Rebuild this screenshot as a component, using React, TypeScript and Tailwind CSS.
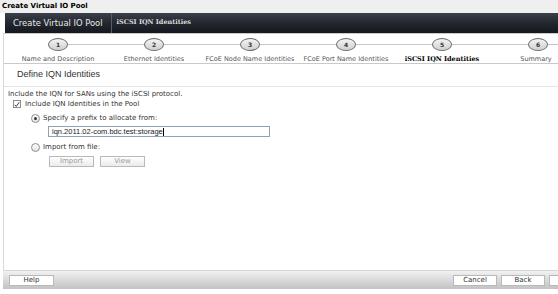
import React from 'react';

const steps = [
    { n: 1, label: 'Name and Description', x: 57 },
    { n: 2, label: 'Ethernet Identities', x: 153 },
    { n: 3, label: 'FCoE Node Name Identities', x: 249 },
    { n: 4, label: 'FCoE Port Name Identities', x: 345 },
    { n: 5, label: 'iSCSI IQN Identities', x: 441, active: true },
    { n: 6, label: 'Summary', x: 537, end: true },
];

function Btn({ label, className = '', disabled }: { label: string; className?: string; disabled?: boolean }) {
    return (
        <div
            className={`flex items-center justify-center border border-[#b9b9b9] text-[7px] ${disabled ? 'text-[#9a9a9a]' : 'text-[#333]'} ${className}`}
        >
            {label}
        </div>
    );
}

export default function App() {
    return (
        <div className="w-[558px] h-[294px] bg-white overflow-hidden relative font-['DejaVu_Sans',sans-serif] text-[#333]">
            {/* window title */}
            <div className="h-[13px] bg-[#efefef] pl-[2px] text-[7px] font-bold leading-[12px] text-black">
                Create Virtual IO Pool
            </div>

            {/* dark header */}
            <div className="ml-[5px] h-[20px] bg-gradient-to-b from-[#3a3f4a] via-[#23272f] to-[#15181d] flex items-center">
                <span className="pl-[8px] pr-[8px] text-[8.4px] text-[#e8e8e8]">Create Virtual IO Pool</span>
                <div className="w-px h-full bg-[#565b64]" />
                <span className="pl-[5px] text-[6.5px] font-bold text-[#dcdcdc] font-['DejaVu_Serif',serif]">iSCSI IQN Identities</span>
            </div>

            {/* body with left border */}
            <div className="ml-[3px] border-l border-[#d8d8d8] h-[237px] flex flex-col">
                {/* steps */}
                <div className="relative h-[31px] shrink-0 border-t border-b border-[#c9c9c9] bg-white">
                    <div className="absolute left-[54px] right-0 top-[10px] h-px bg-[#c8c8c8]" />
                    {steps.map(s => (
                        <div key={s.n} className="absolute top-[4px] flex flex-col items-center" style={{ left: s.x - 3 - 60, width: 120 }}>
                            <div className="w-[20px] h-[13px] rounded-[50%] border border-[#6b6b6b] bg-gradient-to-b from-[#f4f4f4] to-[#d0d0d0] flex items-center justify-center text-[6px] font-bold text-[#333]">
                                {s.n}
                            </div>
                            <div
                                className={`mt-[4px] whitespace-nowrap text-[6.5px] ${s.active ? 'font-bold text-black font-["DejaVu_Serif",serif]' : 'text-[#555]'} ${s.end ? '-translate-x-[2px]' : ''}`}
                            >
                                {s.label}
                            </div>
                        </div>
                    ))}
                </div>

                <div className="h-[23px] shrink-0 border-b border-[#e4e4e4] flex items-center pl-[13px] text-[9px] text-[#333] font-['Liberation_Sans',sans-serif]">
                    Define IQN Identities
                </div>

                <div className="pl-[4px] pt-[2px] text-[7px] text-[#333]">
                    <div className="h-[10px] flex items-center">Include the IQN for SANs using the iSCSI protocol.</div>

                    <div className="h-[10px] flex items-center gap-[4px] pl-[5px]">
                        <div className="w-[8px] h-[8px] border border-[#8e8e8e] bg-white flex items-center justify-center">
                            <svg width="7" height="7" viewBox="0 0 8 8"><path d="M1 4.5 L3 6.5 L7 1" fill="none" stroke="#333" strokeWidth="1.3" /></svg>
                        </div>
                        <span>Include IQN Identities in the Pool</span>
                    </div>

                    <div className="mt-[4px] h-[10px] flex items-center gap-[3px] pl-[23px]">
                        <div className="w-[9px] h-[9px] rounded-full border border-[#8e8e8e] bg-gradient-to-b from-white to-[#e2e2e2] flex items-center justify-center">
                            <div className="w-[3px] h-[3px] rounded-full bg-[#333]" />
                        </div>
                        <span>Specify a prefix to allocate from:</span>
                    </div>

                    <div className="mt-[3px] ml-[40px] w-[222px] h-[11px] border border-[#8fa3b4] bg-white flex items-center pl-[3px] text-[7.5px] text-[#222] font-['Liberation_Sans',sans-serif]">
                        iqn.2011.02-com.bdc.test:storage<span className="w-px h-[8px] bg-black" />
                    </div>

                    <div className="mt-[5px] h-[10px] flex items-center gap-[3px] pl-[23px]">
                        <div className="w-[9px] h-[9px] rounded-full border border-[#8e8e8e] bg-gradient-to-b from-white to-[#e2e2e2]" />
                        <span>Import from file:</span>
                    </div>

                    <div className="mt-[4px] ml-[41px] flex gap-[6px]">
                        <Btn label="Import" className="w-[45px] h-[11px] bg-gradient-to-b from-white to-[#ebebeb]" disabled />
                        <Btn label="View" className="w-[45px] h-[11px] bg-gradient-to-b from-white to-[#ebebeb]" disabled />
                    </div>
                </div>
            </div>

            {/* footer */}
            <div className="absolute left-[3px] right-0 top-[270px] h-[19px] border-t border-[#d6d6d6] bg-gradient-to-b from-[#f2f2f2] to-[#c2c2c2] flex items-center pl-[6px]">
                <Btn label="Help" className="w-[45px] h-[11px] bg-white" />
                <div className="flex-1" />
                <Btn label="Cancel" className="w-[44px] h-[11px] bg-white" />
                <Btn label="Back" className="w-[44px] h-[11px] ml-[4px] bg-white" />
                <Btn label="" className="w-[20px] h-[11px] ml-[4px] -mr-[11px] bg-white" />
            </div>
        </div>
    );
}
